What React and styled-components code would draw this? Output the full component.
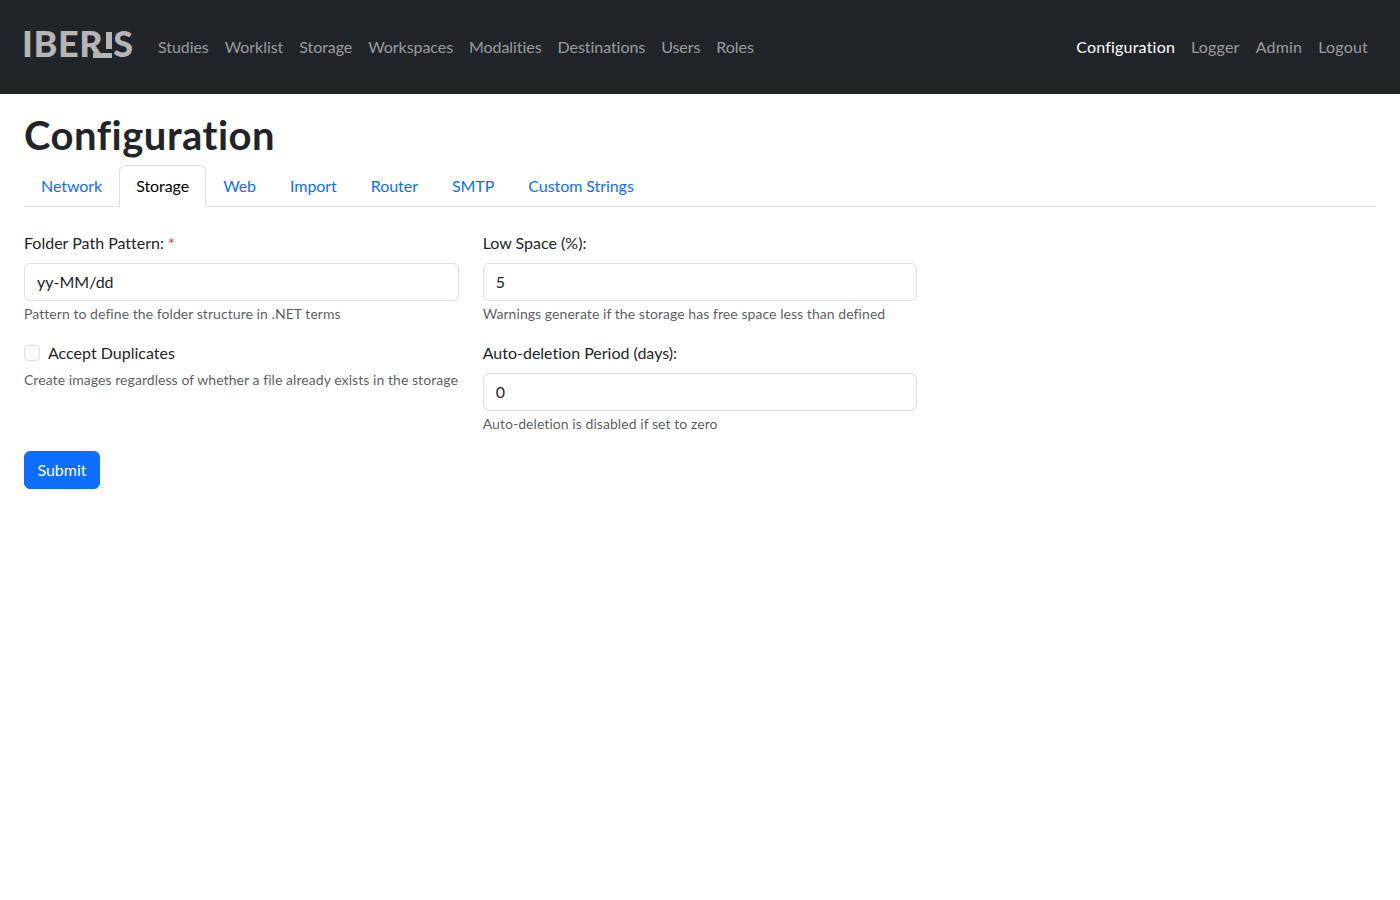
import React from 'react';
import styled, {createGlobalStyle} from 'styled-components';

const GlobalStyle = createGlobalStyle`
  * {
    box-sizing: border-box;
  }

  body {
    margin: 0;
    background: #fff;
    color: #212529;
    font-family: "Lato", "Noto Sans", sans-serif;
    font-size: 16px;
    line-height: 24px;
    font-variant-ligatures: none;
  }
`

const leftLinks = ['Studies', 'Worklist', 'Storage', 'Workspaces', 'Modalities', 'Destinations', 'Users', 'Roles']
const rightLinks = ['Configuration', 'Logger', 'Admin', 'Logout']
const tabs = ['Network', 'Storage', 'Web', 'Import', 'Router', 'SMTP', 'Custom Strings']

const App = () => {
    return (
        <>
            <GlobalStyle/>
            <Navbar>
                <Logo>
                    <LogoText>IBER</LogoText>
                    <LogoMark viewBox="0 0 20 28" aria-hidden="true">
                        <rect x="13" y="1" width="6" height="17" fill="#b5b5b5"/>
                        <rect x="0" y="22" width="19" height="5" fill="#b5b5b5"/>
                    </LogoMark>
                    <LogoText>S</LogoText>
                </Logo>
                <NavGroup>
                    {leftLinks.map(item => <NavLink key={item}>{item}</NavLink>)}
                </NavGroup>
                <NavGroup>
                    {rightLinks.map(item => <NavLink key={item} $wide $active={item === 'Configuration'}>{item}</NavLink>)}
                </NavGroup>
            </Navbar>
            <Main>
                <Title>Configuration</Title>
                <Tabs>
                    {tabs.map(item => <Tab key={item} $active={item === 'Storage'}>{item}</Tab>)}
                </Tabs>
                <FormGrid>
                    <Column>
                        <Field>
                            <Label>Folder Path Pattern: <Required>*</Required></Label>
                            <Input defaultValue="yy-MM/dd"/>
                            <Hint>Pattern to define the folder structure in .NET terms</Hint>
                        </Field>
                        <Field>
                            <CheckRow>
                                <Checkbox type="checkbox"/>
                                <span>Accept Duplicates</span>
                            </CheckRow>
                            <CheckHint>Create images regardless of whether a file already exists in the storage</CheckHint>
                        </Field>
                    </Column>
                    <Column>
                        <Field>
                            <Label>Low Space (%):</Label>
                            <Input defaultValue="5"/>
                            <Hint>Warnings generate if the storage has free space less than defined</Hint>
                        </Field>
                        <Field>
                            <Label>Auto-deletion Period (days):</Label>
                            <Input defaultValue="0"/>
                            <Hint>Auto-deletion is disabled if set to zero</Hint>
                        </Field>
                    </Column>
                </FormGrid>
                <SubmitButton type="button">Submit</SubmitButton>
            </Main>
        </>
    )
}

export default App;

const Navbar = styled.nav`
  display: flex;
  align-items: center;
  height: 94px;
  padding: 0 24px;
  background: #212529;
`

const Logo = styled.div`
  display: flex;
  align-items: center;
  width: 112px;
  height: 40px;
  margin: -8px 16px 0 -2px;
  font-family: "Lato", sans-serif;
  font-weight: 900;
  font-size: 36px;
  letter-spacing: 0.6px;
  color: #b5b5b5;
`

const LogoText = styled.span`
  line-height: 40px;
`

const LogoMark = styled.svg`
  flex: none;
  width: 20px;
  height: 28px;
  margin: 4px 0 0 -10px;
`

const NavGroup = styled.div`
  display: flex;

  &:last-child {
    margin-left: auto;
  }
`

const NavLink = styled.a`
  padding: 8px;
  letter-spacing: ${({$wide}) => $wide ? '0.2px' : '-0.06px'};
  color: ${({$active}) => $active ? '#fff' : 'rgba(255, 255, 255, 0.55)'};
`

const Main = styled.main`
  padding: 0 24px;
`

const Title = styled.h1`
  margin: 0;
  padding-top: 17px;
  font-size: 40px;
  line-height: 48px;
  letter-spacing: 0.5px;
  font-weight: 700;
`

const Tabs = styled.div`
  display: flex;
  margin-top: 6px;
  border-bottom: 1px solid #dee2e6;
`

const Tab = styled.a`
  margin-bottom: -1px;
  padding: 8px 16px;
  border: 1px solid transparent;
  border-color: ${({$active}) => $active ? '#dee2e6 #dee2e6 #fff' : 'transparent'};
  border-radius: 6px 6px 0 0;
  letter-spacing: -0.06px;
  color: ${({$active}) => $active ? '#000' : '#0d6efd'};
  background: ${({$active}) => $active ? '#fff' : 'transparent'};
`

const FormGrid = styled.div`
  display: grid;
  grid-template-columns: repeat(3, minmax(0, 1fr));
  column-gap: 24px;
  padding-top: 24px;
`

const Column = styled.div`
  display: flex;
  flex-direction: column;
`

const Field = styled.div`
  margin-bottom: 16px;
`

const Label = styled.label`
  display: block;
  margin-bottom: 8px;
`

const Required = styled.span`
  color: #dc3545;
`

const Input = styled.input`
  display: block;
  width: 100%;
  height: 38px;
  padding: 5px 12px 7px;
  border: 1px solid #dee2e6;
  border-radius: 6px;
  outline: none;
  font: inherit;
  color: #212529;
`

const Hint = styled.div`
  margin-top: 3px;
  margin-bottom: 1px;
  font-size: 14px;
  line-height: 20px;
  letter-spacing: 0.06px;
  color: rgba(33, 37, 41, 0.75);
`

const CheckRow = styled.label`
  display: flex;
  align-items: center;
  gap: 8px;
  height: 24px;
`

const Checkbox = styled.input`
  appearance: none;
  width: 16px;
  height: 16px;
  margin: 0;
  border: 1px solid #dee2e6;
  border-radius: 4px;
  background: #fff;
`

const CheckHint = styled(Hint)`
  margin-top: 5px;
  white-space: nowrap;
`

const SubmitButton = styled.button`
  display: block;
  width: 76px;
  height: 38px;
  padding: 6px 0;
  border: 1px solid #0d6efd;
  border-radius: 6px;
  background: #0d6efd;
  color: #fff;
  font: inherit;
`
